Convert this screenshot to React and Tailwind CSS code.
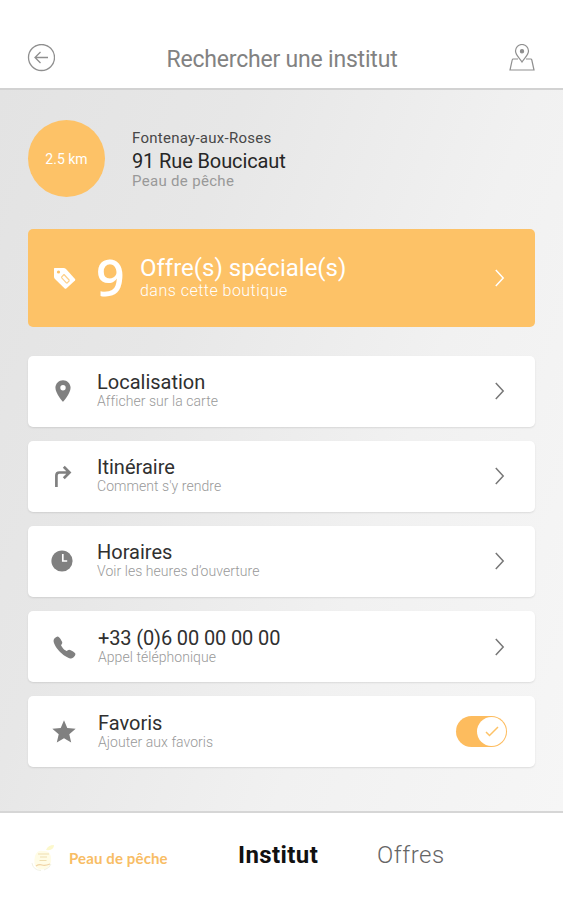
import React, { useState } from "react";
import { MdLocationOn, MdStar } from "react-icons/md";
import { IoCall } from "react-icons/io5";

const BackIcon = () => (
  <svg width="28" height="28" viewBox="0 0 28 28" fill="none" stroke="#8f8f8f" strokeWidth="1.3">
    <circle cx="14.500" cy="13.500" r="13" />
    <path d="M21 13.500H8.300M13.500 8L8 13.500l5.500 5.500" />
  </svg>
);

const MapIcon = () => (
  <svg width="26" height="28" viewBox="0 0 26 28" fill="none" stroke="#8f8f8f" strokeWidth="1.2">
    <path d="M13 18C10.500 14 6.500 11 6.500 7a6.500 6.500 0 0 1 13 0c0 4-4 7-6.500 11z" />
    <circle cx="13" cy="7.200" r="1.600" fill="#8f8f8f" />
    <path d="M9 15H4.200q-.8 0-1 1L1 26h24l-2.200-10q-.2-1-1-1H17" />
  </svg>
);

const TurnIcon = () => (
  <svg width="18" height="23" viewBox="0 0 18 23" fill="none" stroke="#808080" strokeWidth="2.700">
    <path d="M2.400 22V10.500Q2.400 7.500 5.400 7.500h10M9.800 1.800l5.700 5.700-5.700 5.700" />
  </svg>
);

const ClockIcon = () => (
  <svg width="24" height="22" viewBox="0 0 24 22">
    <circle cx="11" cy="11" r="10.600" fill="#808080" />
    <path d="M11.800 4v7h4.400" stroke="#fff" strokeWidth="1.700" fill="none" />
  </svg>
);

const TagIcon = () => (
  <svg width="23" height="23" viewBox="0 0 23 23">
    <path d="M1.500 1h9Q12 1 13 2l9 10q.7.900 0 1.600l-8.700 7.900q-.8.700-1.600 0L2 12Q1 11 1 9.500v-8Q1 1 1.500 1z" fill="#fff" />
    <circle cx="5.500" cy="5" r="1.600" fill="#fdc267" />
    <path d="M11 7.500l5.500 6M8.300 10.300l5.500 6M11 7.500l-2.700 2.800M16.500 13.500l-2.700 2.800" stroke="#fdd08a" strokeWidth="1.200" fill="none" />
  </svg>
);

const Chevron = ({ color = "#777777" }) => (
  <svg width="10" height="18" viewBox="0 0 10 18" fill="none" stroke={color} strokeWidth="1.500">
    <path d="M.8 1l7.400 8-7.400 8" />
  </svg>
);

// Pale peach with a leaf and a few lettering strokes
const Logo = () => (
  <svg width="28" height="28" viewBox="0 0 28 28" fill="none">
    <path d="M17 6Q19 1 25 1q0 6-8 5z" fill="#fcf8cc" />
    <path d="M6 12Q8 6 14 7q7-1 8 6 1 8-4 11-5 3-10 0-4-3-2-12z" fill="#fffce6" />
    <path d="M9 10h11M11 13h7M10.500 16.500h7" stroke="#f0deb0" strokeWidth="1.200" />
    <path d="M7 22q3-2 6-1t8-1" stroke="#f0d3a5" strokeWidth="1.200" />
    <path d="M3 19q1 7 9 7.500M22 20q-1 4-7 6" stroke="#eceedd" strokeWidth=".8" />
  </svg>
);

const rows = [
  { title: "Localisation", sub: "Afficher sur la carte", icon: <MdLocationOn size={26} />, titleClass: "", textClass: "-ml-px -mt-[3px]" },
  { title: "Itinéraire", sub: "Comment s'y rendre", icon: <TurnIcon />, titleClass: "", textClass: "-ml-px -mt-[3px]" },
  { title: "Horaires", sub: "Voir les heures d’ouverture", icon: <ClockIcon />, titleClass: "", textClass: "-ml-px -mt-[3px]" },
  { title: "+33 (0)6 00 00 00 00", sub: "Appel téléphonique", icon: <IoCall size={25} className="mt-0.5 ml-0.5" />, titleClass: "tracking-[-0.13px]", textClass: "-mt-px" },
];

const Row = ({ icon, title, sub, titleClass, textClass, children }) => (
  <div className="flex h-[70.500px] items-center rounded-[5px] bg-white pr-[30px] shadow-[0_1px_2px_rgba(0,0,0,0.1)]">
    <div className="flex w-[70px] shrink-0 items-center justify-center text-[#808080]">{icon}</div>
    <div className={`flex flex-1 flex-col whitespace-nowrap ${textClass}`}>
      <span className={`text-[20px] leading-[22px] text-[#303030] ${titleClass}`}>{title}</span>
      <span className="text-[14px] leading-4 font-light tracking-[0.05px] text-[#999999]">{sub}</span>
    </div>
    {children}
  </div>
);

const App = () => {
  const [favorite, setFavorite] = useState(true);

  return (
    <div className="flex h-[900px] w-[563px] flex-col overflow-hidden bg-white font-[Roboto,sans-serif]">
      {/* Header */}
      <header className="flex h-[90px] shrink-0 items-start justify-between border-b-2 border-[#d2d2d2] pt-11 pr-7 pl-[27px]">
        <button><BackIcon /></button>
        <h1 className="mt-[2px] text-[23px] leading-7 tracking-[-0.2px] whitespace-nowrap text-[#828282]">Rechercher une institut</h1>
        <button><MapIcon /></button>
      </header>

      <main className="flex h-[721px] shrink-0 flex-col bg-[linear-gradient(110deg,#e3e3e3_0%,#e7e7e7_30%,#f1f1f1_65%,#f6f6f6_100%)] px-7 pt-[30px]">
        {/* Shop */}
        <div className="flex h-[77px] shrink-0 items-center">
          <div className="flex size-[77px] shrink-0 items-center justify-center rounded-full bg-[#fdc267] pt-0.5 text-[14px] text-white">
            2.5 km
          </div>
          <div className="ml-[27px] flex flex-col pt-px whitespace-nowrap">
            <span className="text-[15px] leading-[21px] tracking-[0.27px] text-[#484848]">Fontenay-aux-Roses</span>
            <span className="text-[20px] leading-6 tracking-[-0.12px] text-[#262626]">91 Rue Boucicaut</span>
            <span className="text-[15px] leading-[17px] tracking-[0.32px] text-[#999999]">Peau de pêche</span>
          </div>
        </div>

        {/* Offers */}
        <div className="mt-8 flex h-[98px] shrink-0 items-center rounded-[5px] bg-[#fdc267] pr-[30px] text-white">
          <div className="flex w-[68px] justify-center pl-1"><TagIcon /></div>
          <span className="mb-[3px] w-11 font-['Open_Sans',sans-serif] text-[50px] leading-none font-semibold">9</span>
          <div className="flex flex-1 flex-col whitespace-nowrap">
            <span className="text-[24px] leading-[25px]">Offre(s) spéciale(s)</span>
            <span className="text-[16px] leading-[19px] font-light tracking-[0.48px]">dans cette boutique</span>
          </div>
          <Chevron color="#ffffff" />
        </div>

        <div className="mt-[29px] flex flex-col gap-[14.600px]">
          {rows.map((row) => (
            <Row key={row.title} {...row}><Chevron /></Row>
          ))}
          <Row icon={<MdStar size={28} className="mt-px ml-px" />} title="Favoris" sub="Ajouter aux favoris" titleClass="" textClass="-mt-px">
            <button
              onClick={() => setFavorite(!favorite)}
              className={`-mr-[2px] flex h-[31px] w-[51px] items-center rounded-full bg-[#fdbc5e] p-px ${favorite ? "justify-end" : "justify-start"}`}
            >
              <span className="flex size-[29px] items-center justify-center rounded-full bg-white">
                <svg width="14" height="11" viewBox="0 0 14 11" fill="none" stroke="#fdc267" strokeWidth="1.500">
                  <path d="M1 6l3.500 3.500L13 1" />
                </svg>
              </span>
            </button>
          </Row>
        </div>
      </main>

      {/* Bottom tabs */}
      <footer className="flex flex-1 border-t-2 border-[#d6d6d6] pt-7 pl-[29px] whitespace-nowrap">
        <div className="mt-[3px] flex h-7 w-[209px] items-center gap-3">
          <Logo />
          <span className="font-[Lato,sans-serif] text-[15px] leading-5 font-bold tracking-[0.13px] text-[#f8bd65]">Peau de pêche</span>
        </div>
        <span className="w-[139px] text-[24px] leading-7 font-bold tracking-[0.4px] text-[#111111]">Institut</span>
        <span className="text-[24px] leading-7 font-light tracking-[0.5px] text-[#666666]">Offres</span>
      </footer>
    </div>
  );
};

export default App;
